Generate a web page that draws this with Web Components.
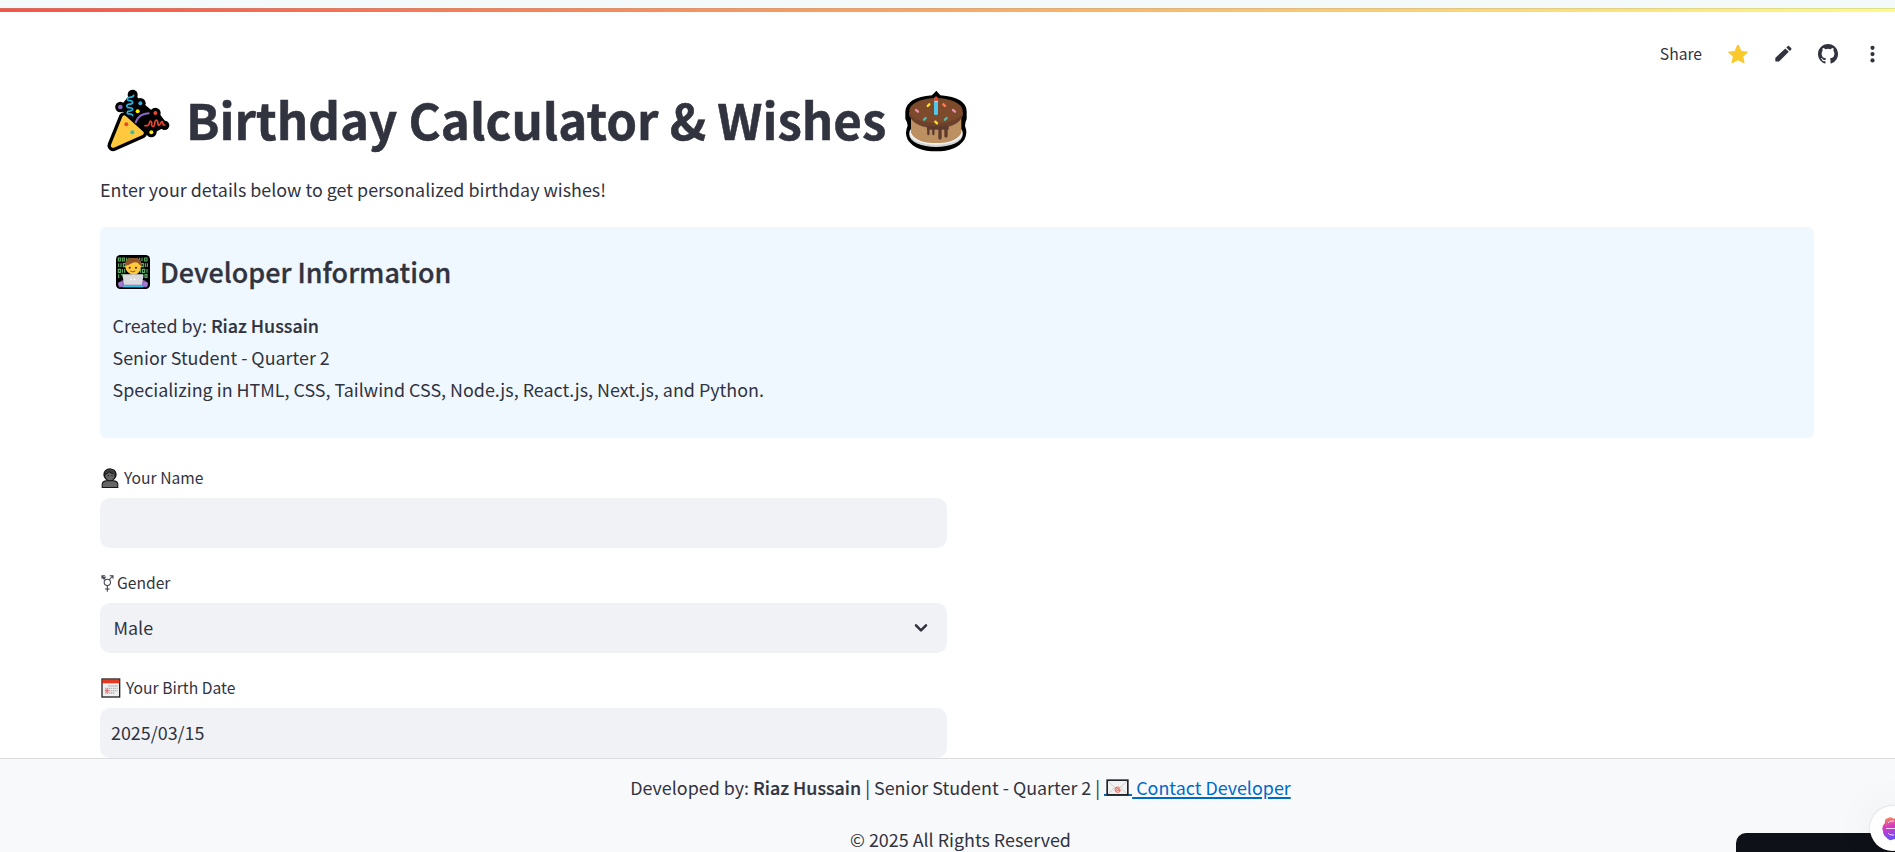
<!DOCTYPE html>
<html lang="en">
<head>
<meta charset="utf-8">
<title>Birthday Calculator &amp; Wishes</title>
<style>
html,body{margin:0;height:100%;overflow:hidden}
body{background:#fff;color:#31333f;font-family:"Noto Sans CJK SC","Noto Sans",sans-serif;font-size:17.9px;line-height:32px}
</style>
</head>
<body>
<birthday-app></birthday-app>
<script>
const define = (name, html) => customElements.define(name, class extends HTMLElement {
  constructor() {
    super();
    this.attachShadow({ mode: 'open' }).innerHTML = html;
  }
});

const partyIcon = `<svg width="80" height="80" viewBox="0 -3 240 240" fill="none" stroke-linecap="round" stroke-linejoin="round">
<path d="M73 113L39 197 125 159Z" fill="#000" stroke="#000" stroke-width="33"/>
<path d="M64 84L98 44 120 70 152 96 168 97 196 134 153 156 120 130 85 100Z" fill="#000" stroke="#000" stroke-width="12"/>
<g fill="#000"><circle cx="61" cy="81" r="15.500"/><circle cx="98" cy="44" r="15"/><circle cx="121" cy="70" r="16"/><circle cx="166" cy="99" r="16"/><circle cx="194" cy="136" r="14"/><circle cx="154" cy="156" r="16"/></g>
<path d="M73 113L39 197 125 159Z" fill="#ffc83d" stroke="#ffc83d" stroke-width="13"/>
<path d="M101 46q-2 7-14 6-8 2-3 9 15 0 14 7-2 5-13 5-9 4-1 10 14-1 14 6-3 5-13 5-6 3-1 8 15-1 14 5" stroke="#26b4e5" stroke-width="5"/>
<path d="M107 127Q117 101 146 100" stroke="#8d65c5" stroke-width="6"/>
<path d="M135 137h7q5 0 6-8 3-11 7-1v8q4 8 8 0l2-11q4-9 8 0l1 8q2 7 8-3 4-9 6-3l2 8h5" stroke="#e8452e" stroke-width="5"/>
<circle cx="61" cy="81" r="7" fill="#8d65c5"/><circle cx="121" cy="70" r="6" fill="#26b4e5"/><circle cx="113" cy="94" r="6" fill="#fff000"/><circle cx="166" cy="99" r="6" fill="#e8452e"/><circle cx="154" cy="157" r="6" fill="#fff000"/><circle cx="79" cy="133" r="6" fill="#e64b22"/><circle cx="97" cy="157" r="6" fill="#39b8a6"/>
</svg>`;

const cakeIcon = `<svg width="80" height="80" viewBox="0 -3 240 240" fill="none" stroke-linecap="round">
<path d="M121 32l12 14q78 6 79 48v23q-5 10-5 21 9 22-2 41-24 35-85 35-62 0-85-35-10-20 0-42 0-10-7-20V94q4-42 80-48Z" fill="#000"/>
<ellipse cx="120" cy="164" rx="80" ry="37" fill="#d3d3d3"/><ellipse cx="120" cy="159" rx="80" ry="35" fill="#f2f2f2"/>
<path d="M45 104h151v54q-14 31-76 31-61 0-75-31Z" fill="#bd9061"/>
<path d="M39 96h162v10q-14 38-81 38-65 0-81-38Z" fill="#6b412b"/>
<path d="M93 139h65v10H93Z" fill="#5c3a2e"/>
<path d="M97 145v17M112 145v17" stroke="#5c3a2e" stroke-width="7"/><path d="M132 145v29M150 140v28" stroke="#5c3a2e" stroke-width="10"/>
<ellipse cx="120" cy="92" rx="80" ry="38" fill="#7d4b2b"/>
<path d="M120 57v43" stroke="#50c6e9" stroke-width="12"/><path d="M120 47q-7 8-5 17h11q2-8-6-17Z" fill="#e83a20"/><path d="M117 64h8" stroke="#c8ddd5" stroke-width="3"/>
<g stroke-width="7"><path d="M60 90l6 5M171 90l6 5" stroke="#e98daf"/><path d="M95 78l5-5M118 125l5 5" stroke="#ffe326"/><path d="M142 73l5 5" stroke="#ff8059"/><path d="M84 119l5-5M147 119l5-5" stroke="#4bbfb1"/></g>
</svg>`;

const developerIcon = `<svg width="34" height="34" viewBox="0 0 102 102">
<rect width="102" height="102" rx="13" fill="#000"/>
<g fill="none" stroke="#5fae66" stroke-width="3.5"><path d="M7 9h6v9H7ZM19 9h6v9h-6ZM32 8v11M39 8v11M64 8v11M71 8v11M78 8v11M86 9h7v9h-7ZM8 25v11M15 25v11M22 26h6v9h-6ZM75 26h7v9h-7ZM88 25v11M94 25v11M7 43h6v9H7ZM19 42v11M26 42v11M73 42v11M79 43h7v9h-7ZM93 42v11M8 58v11M15 59h6v8M80 58v11M87 59h6v8h-6Z"/></g>
<path d="M8 97q0-20 15-22h59q13 3 12 22Z" fill="#8965b5"/><path d="M30 60h43v20H30Z" fill="#f4b23b"/>
<path d="M28 37q-4-18 13-27h21q15 7 13 25-2 23-24 24-19-2-23-22Z" fill="#ffc83d"/>
<path d="M27 32q-1-15 13-23h24q15 8 12 24-5-1-9-8-6-5-17-2-12 8-23 9Z" fill="#915429"/>
<circle cx="41" cy="38" r="3" fill="#382520"/><circle cx="60" cy="38" r="3" fill="#382520"/><path d="M43 48q7 5 15 0" fill="none" stroke="#8e5a23" stroke-width="3"/>
<path d="M19 91h64l-3 6H22Z" fill="#38bde8"/><path d="M23 58h56q3 0 3 4l-4 27H24L20 62q0-4 3-4Z" fill="#d9dadd"/>
<path d="M43 71h5v5h-5ZM53 71h5v5h-5Z" fill="#fff"/><circle cx="13" cy="87" r="7" fill="#a27bd0"/><circle cx="89" cy="87" r="7" fill="#a27bd0"/>
</svg>`;

const personIcon = `<svg width="18" height="22" viewBox="0 0 54 66"><path d="M2 63V51q1-10 15-11-10-7-10-18Q9 5 27 4q19 2 20 18 0 11-10 18 14 1 15 11v12Z" fill="#171717"/><path d="M5 60v-8q1-8 14-9h16q13 1 14 9v8Z" fill="#666"/><path d="M12 24q7-1 12-8 6 6 17 6 0 18-14 18-12 0-15-16Z" fill="#666"/><path d="M11 21q2-14 16-14 14 0 16 14-11-1-18-8-5 7-14 8Z" fill="#3c3c3c"/><circle cx="22" cy="26" r="1.8"/><circle cx="33" cy="26" r="1.8"/></svg>`;

const genderIcon = `<svg width="14" height="20" viewBox="0 0 42 60" fill="none" stroke="#3f414c" stroke-width="3.200"><circle cx="19" cy="28" r="9.500"/><path d="M19 37v19M12 48h14M25 20L35 9M26 8h10v9M13 20L4 9M3 17V8h9M6 19l8-8"/></svg>`;

const calendarIcon = `<svg width="20" height="20" viewBox="0 0 60 60"><path d="M1 1h57v58H1Z" fill="#252525"/><path d="M5 15h49v40H5Z" fill="#f0f0f0"/><path d="M4 4h51v12H4Z" fill="#e43b20"/><path d="M22 24h28M12 31h38M12 38h38M12 45h28" stroke="#b0b0b0" stroke-width="4" stroke-dasharray="4 2"/><path d="M11 38h14M14 33l8 11M22 33l-8 11M18 31v15" stroke="#e66c72" stroke-width="2.4"/></svg>`;

const mailIcon = `<svg width="23" height="17" viewBox="0 0 69 51"><path d="M1 1h67v49H1Z" fill="#20252c"/><path d="M6 6h57v39H6Z" fill="#f1f1f1"/><path d="M7 44L27 25M62 44L42 25M6 7l22 19q7 6 14 0L63 7" fill="none" stroke="#c8c8c8" stroke-width="2.4"/><circle cx="35" cy="32" r="8" fill="none" stroke="#f35f4e" stroke-width="3" stroke-dasharray="43 8"/><path d="M38 29q-6-4-7 3 0 6 7 1l1-4q-2 7 4 6" fill="none" stroke="#f35f4e" stroke-width="2.8"/></svg>`;

define('app-decoration', `<style>
:host{display:block;height:12px;flex:none}
.strip{height:8px;background:#f3faf9}
.line{height:4px;box-sizing:border-box;border-top:1px solid rgba(150,160,150,.28);background:linear-gradient(90deg,#f55449,#fdfb85)}
</style><div class="strip"></div><div class="line"></div>`);

define('app-toolbar', `<style>
:host{display:flex;box-sizing:border-box;height:64px;flex:none;padding:20px 12px 0 0;justify-content:flex-end;align-items:center}
span{font-size:15.7px;line-height:26px;margin-right:25px;letter-spacing:-.03px}
svg{display:block;margin-right:23px;flex:none}svg.pencil{margin-right:24px}svg:last-child{margin:0}
</style><span>Share</span>
<svg width="22" height="22" viewBox="0 0 24 24" fill="#fac92b"><path d="M12 1.8q.8 0 1.2 1l2.5 5.8 6.2.6q1.6.3.5 1.500l-4.700 4.100 1.400 6.100q.3 1.800-1.300 1L12 18.800l-5.800 3.100q-1.500.8-1.200-1l1.400-6.100-4.700-4.100Q.7 9.500 2.200 9.200l6.100-.6 2.500-5.800q.4-1 1.200-1Z"/></svg>
<svg class="pencil" width="22" height="22" viewBox="0 0 22 22" fill="#31333f"><path d="M13.400 5.400l3.400 3.400L7.600 18q-.5.500-1.200.5H4q-.7 0-.7-.7v-2.400q0-.5.4-.9ZM14.400 4.400l1.200-1.200q.8-.8 1.600 0l1.900 1.900q.8.800 0 1.600l-1.300 1.200Z"/></svg>
<svg width="20" height="20" viewBox="0 0 16 16" fill="#31333f"><path d="M8 0C3.580 0 0 3.580 0 8c0 3.540 2.290 6.530 5.470 7.590.4.070.55-.17.55-.38 0-.19-.01-.82-.01-1.490-2.010.37-2.530-.49-2.690-.94-.09-.23-.48-.94-.82-1.130-.28-.15-.68-.52-.01-.53.63-.01 1.080.58 1.230.82.72 1.210 1.870.87 2.330.66.070-.52.28-.87.51-1.070-1.780-.2-3.640-.89-3.640-3.950 0-.87.310-1.590.82-2.150-.08-.2-.36-1.020.08-2.120 0 0 .67-.21 2.200.82a7.600 7.600 0 0 1 4 0c1.530-1.040 2.200-.82 2.200-.82.440 1.100.160 1.920.080 2.120.510.560.820 1.270.820 2.150 0 3.070-1.870 3.750-3.650 3.950.290.250.540.730.540 1.480 0 1.070-.010 1.930-.010 2.200 0 .210.150.460.550.380A8 8 0 0 0 8 0Z"/></svg>
<svg width="22" height="22" viewBox="0 0 22 22" fill="#31333f"><circle cx="11.500" cy="4.800" r="2.100"/><circle cx="11.500" cy="11.100" r="2.100"/><circle cx="11.500" cy="17.400" r="2.100"/></svg>`);

define('app-title', `<style>
:host{display:flex;align-items:center;height:66px}
h1{margin:0 10px 0 6px;font-size:49.250px;line-height:66px;font-weight:700;white-space:nowrap;-webkit-text-stroke:.5px currentColor}
svg{flex:none}
</style>${partyIcon}<h1><slot></slot></h1>${cakeIcon}`);

define('developer-card', `<style>
:host{display:block;box-sizing:border-box;height:211px;margin-top:22px;padding:27px 12.500px;background:#f0f8ff;border-radius:6px}
h4{display:flex;align-items:center;gap:10.500px;margin:0 0 19px 3px;height:36px;line-height:36px;font-size:26.900px;font-weight:500;-webkit-text-stroke:.3px currentColor}
svg{flex:none}p{margin:0}strong{font-weight:500;-webkit-text-stroke:.2px currentColor}
</style><h4>${developerIcon}<span>Developer Information</span></h4>
<p>Created by: <strong>Riaz Hussain</strong></p><p>Senior Student - Quarter 2</p><p>Specializing in HTML, CSS, Tailwind CSS, Node.js, React.js, Next.js, and Python.</p>`);

define('form-field', `<style>
:host{display:block;width:847px;margin-bottom:21px}
label{display:flex;align-items:center;height:26px;margin-bottom:7px;padding-top:1px;font-size:15.650px;line-height:26px;gap:var(--label-gap,5px)}
.icon{display:flex;margin-left:1px}
.control{display:flex;align-items:center;justify-content:space-between;box-sizing:border-box;height:50px;border-radius:10px;background:#f0f2f6;padding:0 18px 0 var(--inset,13px)}
.value{padding-bottom:2px}
</style><label><span class="icon"></span><span class="text"></span></label><div class="control"><div class="value"><slot></slot></div><slot name="end"></slot></div>`);

define('app-footer', `<style>
:host{display:block;box-sizing:border-box;flex:none;height:94px;padding:12px 0 0 26px;border-top:1px solid #d9dbdf;background:#f8f9fb;text-align:center;white-space:nowrap;overflow:hidden}
p{margin:0 0 20px}strong{font-weight:500;-webkit-text-stroke:.2px currentColor}
a{color:#0068c9;text-decoration:underline;text-decoration-thickness:2px;text-underline-offset:2px}
svg{vertical-align:-1px;margin:0 3px 0 2px}
.mail{display:inline-block;height:20px;line-height:20px;vertical-align:baseline;background:linear-gradient(#0068c9,#0068c9) 0 17px/100% 2px no-repeat}
</style><p>Developed by: <strong>Riaz Hussain</strong> | Senior Student - Quarter 2 | <a href="#"><span class="mail">${mailIcon}</span> Contact Developer</a></p><p>© 2025 All Rights Reserved</p>`);

define('floating-widgets', `<style>
:host{position:absolute;right:0;bottom:0;width:400px;height:240px;overflow:hidden;pointer-events:none}
.panel{position:absolute;right:0;bottom:0;width:159px;height:19px;border-radius:10px 0 0 0;background:#0e1117}
.bubble{position:absolute;left:375px;top:194px;width:45px;height:45px;border-radius:50%;background:#fff;box-shadow:0 0 3px rgba(0,0,0,.13),0 0 45px rgba(0,0,0,.06)}
.bubble svg{position:absolute;left:12px;top:10px}
</style><div class="panel"></div><div class="bubble"><svg width="24" height="26" viewBox="0 0 24 26"><defs><linearGradient id="g" x1="0" y1="0" x2=".3" y2="1"><stop stop-color="#ff9b3d"/><stop offset=".45" stop-color="#d638c4"/><stop offset="1" stop-color="#6651f5"/></linearGradient></defs><path d="M12 3Q9 0 6 2 2 3 3 7-1 10 1 15 1 19 4 21 7 26 12 23 18 26 21 21q4-5 2-11 0-6-5-8-4-2-6 1Z" fill="url(#g)"/><path d="M6 7q1-2 4-2h2M4 12.500h9M6 17q1 2 4 2h2" fill="none" stroke="#ffd7ff"/></svg></div>`);

define('birthday-app', `<style>
:host{display:flex;flex-direction:column;height:852px;position:relative;overflow:hidden}
main{display:block;flex:1;min-height:0;padding:10px 81px 0 100px;overflow:hidden}
.intro{margin:21px 0 0}form{margin-top:26px}
.male{margin-left:.5px}
</style><app-decoration></app-decoration><app-toolbar></app-toolbar>
<main><app-title>Birthday Calculator &amp; Wishes</app-title><p class="intro">Enter your details below to get personalized birthday wishes!</p><developer-card></developer-card>
<form><form-field icon="person" label="Your Name"></form-field>
<form-field icon="gender" label="Gender" style="--label-gap:2px"><span class="male">Male</span><svg slot="end" width="16" height="16" viewBox="0 0 16 16" fill="none" stroke="#31333f" stroke-width="2.600" stroke-linecap="round" stroke-linejoin="round"><path d="M3 5.300l5 5 5-5"/></svg></form-field>
<form-field icon="calendar" label="Your Birth Date" style="--inset:11px">2025/03/15</form-field></form></main>
<app-footer></app-footer><floating-widgets></floating-widgets>`);

const fieldIcons = { person: personIcon, gender: genderIcon, calendar: calendarIcon };
const app = document.querySelector('birthday-app');
for (const field of app.shadowRoot.querySelectorAll('form-field')) {
  field.shadowRoot.querySelector('.icon').innerHTML = fieldIcons[field.getAttribute('icon')];
  field.shadowRoot.querySelector('.text').textContent = field.getAttribute('label');
}
</script>
</body>
</html>
